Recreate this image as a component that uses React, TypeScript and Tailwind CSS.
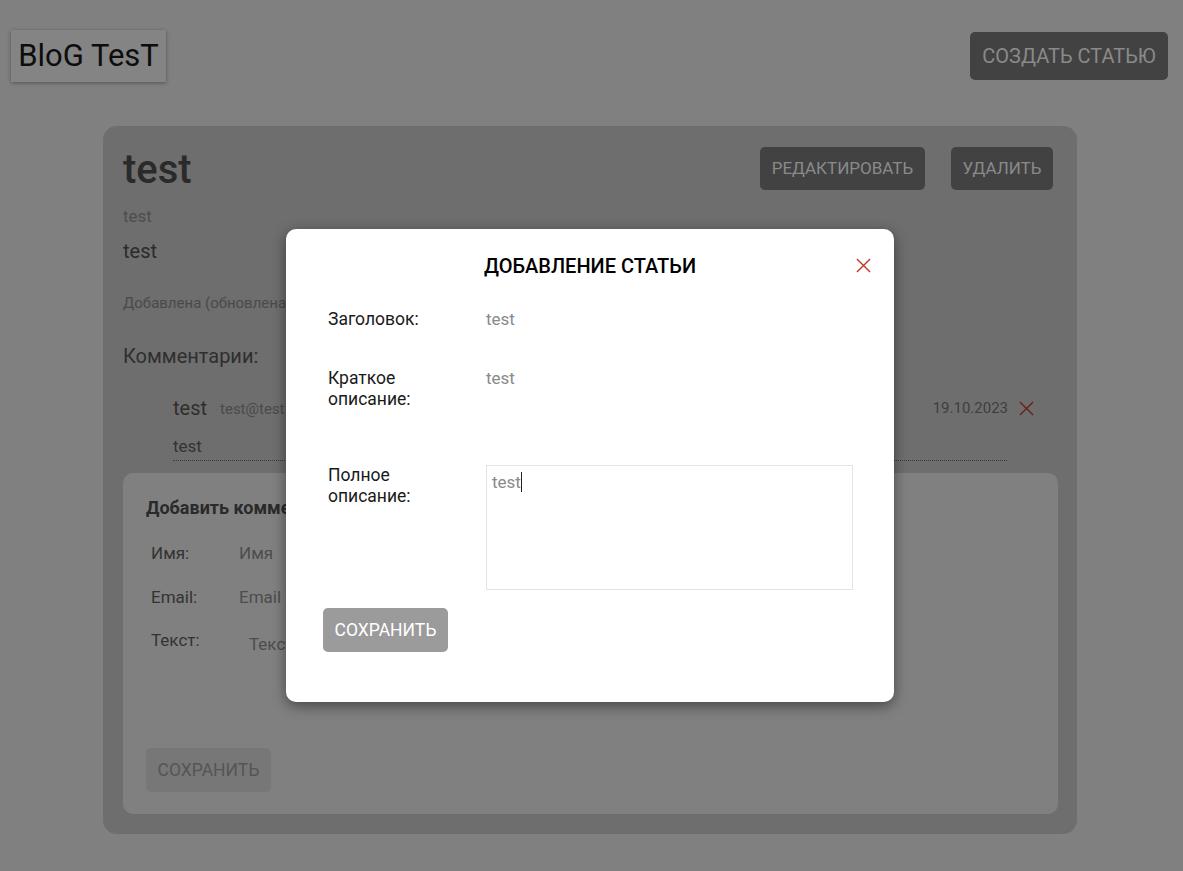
import React from "react";

function XIcon({ className }: { className?: string }) {
  return (
    <svg viewBox="0 0 16 16" className={className} fill="none" stroke="currentColor" strokeWidth={1.5}>
      <path d="M1 1 L15 15 M15 1 L1 15" />
    </svg>
  );
}

export default function App() {
  return (
    <div className="min-h-screen bg-[#808080] font-['Roboto','Liberation_Sans',sans-serif] relative">
      {/* Header */}
      <header className="flex items-start justify-between pl-[11px] pr-[15px] pt-[30px]">
        <div className="h-[52px] w-[155px] bg-[#848484] shadow-[0_1px_4px_rgba(0,0,0,0.35)] flex items-center justify-center text-[31px] text-[#0d0d0d]">
          BloG TesT
        </div>
        <button className="mt-[2px] h-[48px] w-[198px] rounded-[5px] bg-[#424242] text-[20px] text-[#8a8a8a] uppercase">
          Создать статью
        </button>
      </header>

      {/* Article card */}
      <main className="mx-[103px] mt-[44px] w-[974px] rounded-[14px] bg-[#6e6e6e] pt-[20px] pl-[20px] pr-[19px] pb-[20px]">
        <div className="flex items-start justify-between pr-[5px]">
          <h1 className="text-[40px] leading-[48px] font-medium text-[#2a2a2a]">test</h1>
          <div className="flex gap-[26px] mt-[1px]">
            <button className="h-[43px] w-[165px] rounded-[5px] bg-[#424242] text-[17px] text-[#8a8a8a] uppercase">
              Редактировать
            </button>
            <button className="h-[43px] w-[102px] rounded-[5px] bg-[#424242] text-[17px] text-[#8a8a8a] uppercase">
              Удалить
            </button>
          </div>
        </div>
        <div className="mt-[12px] text-[17px] leading-[20px] text-[#4d4d4d]">test</div>
        <div className="mt-[13px] text-[20px] leading-[24px] text-[#2b2b2b]">test</div>
        <div className="mt-[30px] text-[15px] leading-[20px] text-[#4a4a4a]">Добавлена (обновлена): 19.10.2023</div>
        <div className="mt-[31px] text-[20px] leading-[24px] text-[#2e2e2e]">Комментарии:</div>

        {/* Comment */}
        <div className="mt-[28px] pl-[50px] flex items-start">
          <div className="w-[834px]">
            <div className="flex items-center justify-between">
              <div className="flex items-center gap-[13px]">
                <span className="text-[20px] leading-[24px] text-[#2e2e2e]">test</span>
                <span className="text-[15px] leading-[20px] text-[#4a4a4a] mt-[2px]">test@test.ru</span>
              </div>
              <span className="text-[15px] leading-[20px] text-[#3e3e3e] mr-[-1px]">19.10.2023</span>
            </div>
            <div className="mt-[16px] pb-[4px] text-[17px] leading-[20px] text-[#333] border-b border-dotted border-[#3a3a3a]">
              test
            </div>
          </div>
          <XIcon className="ml-[12px] mt-[5px] w-[15px] h-[15px] text-[#6b1f1f]" />
        </div>

        {/* Comment form */}
        <section className="mt-[12px] w-[935px] rounded-[10px] bg-[#808080] pt-[23px] pl-[23px] pb-[22px]">
          <h2 className="text-[18px] leading-[24px] font-bold text-[#2a2a2a]">Добавить комментарий</h2>
          <div className="mt-[21px] pl-[5px] flex items-center text-[17px] leading-[24px]">
            <span className="w-[88px] text-[#333]">Имя:</span>
            <span className="text-[#4d4d4d]">Имя</span>
          </div>
          <div className="mt-[20px] pl-[5px] flex items-center text-[17px] leading-[24px]">
            <span className="w-[88px] text-[#333]">Email:</span>
            <span className="text-[#4d4d4d]">Email</span>
          </div>
          <div className="mt-[19px] pl-[5px] flex items-start text-[17px] leading-[24px] h-[100px]">
            <span className="w-[88px] text-[#333]">Текст:</span>
            <span className="ml-[10px] mt-[4px] text-[#4d4d4d]">Текст</span>
          </div>
          <button className="mt-[20px] h-[44px] w-[125px] rounded-[5px] bg-[#777777] text-[17.5px] text-[#555] uppercase">
            Сохранить
          </button>
        </section>
      </main>
      <div className="h-[37px]" />

      {/* Modal */}
      <div className="absolute left-[286px] top-[229px] w-[608px] h-[473px] rounded-[10px] bg-white shadow-[0_4px_14px_rgba(0,0,0,0.45)] pt-[25px] pl-[37px] pr-[23px]">
        <div className="relative flex items-center justify-center pr-[14px]">
          <h2 className="text-[20px] leading-[24px] font-medium text-black uppercase">Добавление статьи</h2>
          <XIcon className="absolute right-0 top-[4px] w-[15px] h-[15px] text-[#c0392b]" />
        </div>
        <div className="pl-[5px]">
          <div className="mt-[31px] flex items-start">
            <span className="w-[158px] text-[17.5px] leading-[20px] text-[#1a1a1a]">Заголовок:</span>
            <span className="text-[17px] leading-[20px] text-[#8a8a8a]">test</span>
          </div>
          <div className="mt-[39px] flex items-start">
            <span className="w-[100px] mr-[58px] text-[17.5px] leading-[21px] text-[#1a1a1a]">Краткое описание:</span>
            <span className="text-[17px] leading-[21px] text-[#8a8a8a]">test</span>
          </div>
          <div className="mt-[55px] flex items-start">
            <span className="w-[100px] mr-[58px] text-[17.5px] leading-[21px] text-[#1a1a1a]">Полное описание:</span>
            <div className="w-[367px] h-[125px] border border-[#e3e3e3] pl-[5px] pt-[5px] text-[17px] leading-[22px] text-[#8a8a8a] flex items-start">
              <span>test</span>
              <span className="inline-block w-px h-[20px] bg-[#222] mt-[1px]" />
            </div>
          </div>
        </div>
        <button className="mt-[18px] h-[44px] w-[125px] rounded-[5px] bg-[#9b9b9b] text-[17.5px] text-white uppercase">
          Сохранить
        </button>
      </div>
    </div>
  );
}
